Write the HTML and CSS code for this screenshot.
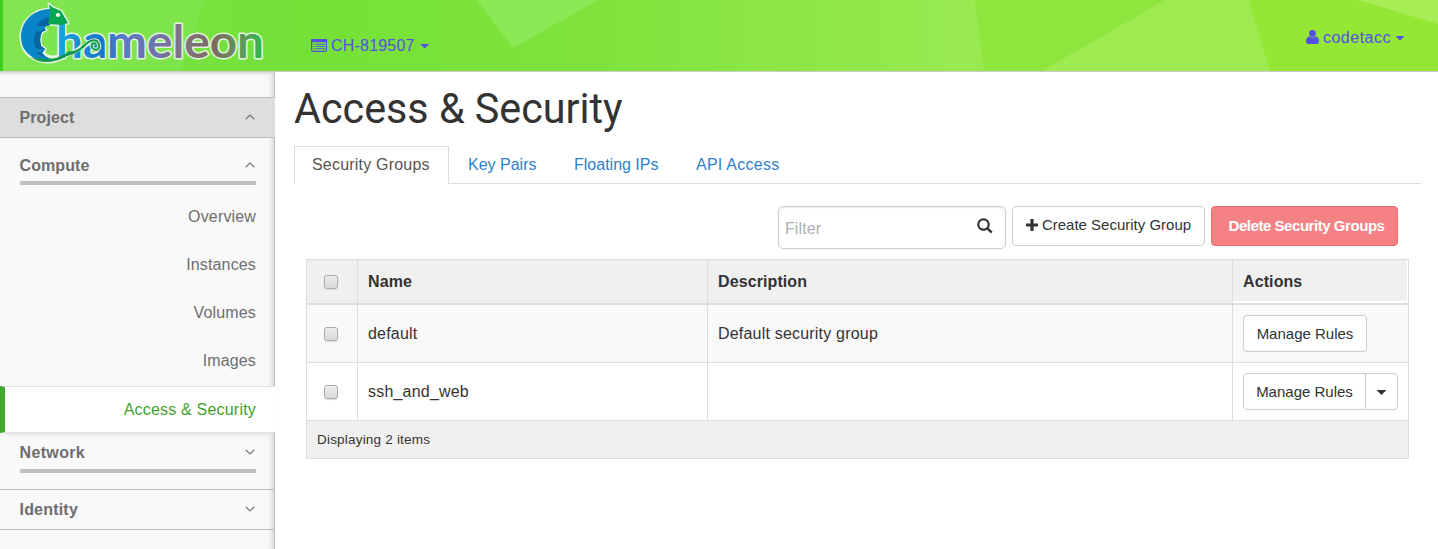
FILE: index.html
```html
<!DOCTYPE html>
<html lang="en">
<head>
<meta charset="utf-8">
<title>Access &amp; Security</title>
<link rel="stylesheet" href="styles.css">
</head>
<body>
<header class="topbar">
  <svg class="topbar-art" viewBox="0 0 1438 71" preserveAspectRatio="none" aria-hidden="true">
    <defs><linearGradient id="sky" x1="0" x2="1"><stop offset="0" stop-color="#7ee44b"/><stop offset=".2" stop-color="#73e137"/><stop offset=".42" stop-color="#80e33c"/><stop offset=".67" stop-color="#98ea50"/><stop offset="1" stop-color="#9be93b"/></linearGradient></defs>
    <rect width="1438" height="71" fill="url(#sky)"/>
    <path d="M0 0H205L180 71H0Z" fill="#82e654" opacity=".6"/>
    <path d="M0 0H3V71H0Z" fill="#3dcf1c"/>
    <path d="M477 0H598L513 48Z" fill="#8ae955"/>
    <path d="M975 0H1165L1042 71H984Z" fill="#8de53d"/>
    <path d="M1165 0H1249L1270 71H1042Z" fill="#9deb51"/>
    <path d="M1249 0H1358L1438 24V71H1270Z" fill="#95e735"/>
    <path d="M1358 0H1438V24Z" fill="#a6ed56"/>
  </svg>
  <a class="logo" href="#">
    <svg width="275" height="71" viewBox="0 0 275 71">
      <defs>
        <linearGradient id="word" gradientUnits="userSpaceOnUse" x1="58" x2="262" y1="0" y2="0"><stop offset="0" stop-color="#18a5e0"/><stop offset=".22" stop-color="#1b75c8"/><stop offset=".32" stop-color="#5b79c6"/><stop offset=".5" stop-color="#7373a5"/><stop offset=".62" stop-color="#80737f"/><stop offset=".77" stop-color="#7c6b60"/><stop offset=".9" stop-color="#60985a"/><stop offset="1" stop-color="#31b64d"/></linearGradient>
      </defs>
      <path class="halo" d="M50 9C30 10 21 24 21 37C21 50 29 60 46 62Q58 62 66 56L58 56Q50 59 43 53L45 49L41 46Q39 38 42 32L46 30L43 27L48 24L62 25L68 23L61 11L52 7L49 4Z"/>
      <text class="wordmark" x="56" y="58" textLength="208" lengthAdjust="spacingAndGlyphs" fill="url(#word)">hameleon</text>
      <path d="M50 9C30 10 21 24 21 37C21 49 29 59 46 61L52 59Q46 58 42 53L45 49L41 46Q39 38 42 32L46 30L43 27L50 25Z" fill="#0785c8"/>
      <path d="M50 17Q40 19 36 26L39 27L36 31Q31 42 38 54L49 59Q45 57 42 53L45 49L41 46Q39 38 42 32L46 30L43 27L50 25Z" fill="#07669f"/>
      <path d="M38 26H46L44 30L38 32L34 29ZM34 47L38 49H44L41 52L36 52Z" fill="#0785c8"/>
      <path d="M49 4L52 7L61 11L68 23L62 25L48 24Q51 14 49 4Z" fill="#08a650"/>
      <circle cx="58" cy="15" r="2.1" fill="#fff"/>
      <path class="tail-edge" d="M65 55Q74 54 82 46"/>
      <path d="M31 57Q42 59 50 59Q60 58 69 51Q77 52 83 45L84 47Q77 54 67 56Q57 62 46 62Q37 62 31 57Z" fill="#129950"/>
      <path class="curl-edge" d="M85 46Q91 39 97 41Q102 48 96 50Q90 48 92 44Q96 42 96 46"/>
      <path class="curl" d="M83 47Q91 38 97 41Q102 48 96 50Q90 48 92 44Q96 42 96 46"/>
    </svg>
  </a>
  <a class="project-menu" href="#">
    <svg width="16" height="13" viewBox="0 0 16 13"><rect x=".6" y=".6" width="14.8" height="11.8" rx="1.2" fill="none" stroke="currentColor" stroke-width="1.2"/><path d="M0 0H16V3.2H0Z" fill="currentColor"/><path d="M2.2 5.3H3.4M4.5 5.3H14M2.2 7.5H3.4M4.5 7.5H14M2.2 9.7H3.4M4.5 9.7H14" stroke="currentColor" stroke-width=".9"/></svg>
    <span class="project-name">CH-819507</span><i class="caret"></i>
  </a>
  <a class="user-menu" href="#">
    <svg width="13" height="14" viewBox="0 0 13 14"><circle cx="6.5" cy="3.5" r="3.4" fill="currentColor"/><path d="M3.2 6.2Q6.5 9 9.8 6.2Q13 7 13 11.5Q13 14 10.8 14H2.2Q0 14 0 11.5Q0 7 3.2 6.2Z" fill="currentColor"/></svg>
    <span class="user-name">codetacc</span><i class="caret"></i>
  </a>
</header>
<div class="page">
  <nav class="sidebar">
    <div class="section open"><span>Project</span><svg class="chev" viewBox="0 0 10 6"><path d="M.7 5.2L5 1L9.3 5.2"/></svg></div>
    <div class="group compute"><span>Compute</span><svg class="chev" viewBox="0 0 10 6"><path d="M.7 5.2L5 1L9.3 5.2"/></svg></div>
    <ul class="links">
      <li>Overview</li><li>Instances</li><li>Volumes</li><li>Images</li>
      <li class="active">Access &amp; Security</li>
    </ul>
    <div class="group network"><span>Network</span><svg class="chev" viewBox="0 0 10 6"><path d="M.7 .8L5 5L9.3 .8"/></svg></div>
    <div class="section identity"><span>Identity</span><svg class="chev" viewBox="0 0 10 6"><path d="M.7 .8L5 5L9.3 .8"/></svg></div>
  </nav>
  <main class="content">
    <h1><span class="title">Access &amp; Security</span></h1>
    <div class="tabs">
      <a class="tab current" href="#">Security Groups</a><a class="tab t-keys" href="#">Key Pairs</a><a class="tab t-ips" href="#">Floating IPs</a><a class="tab t-api" href="#">API Access</a>
    </div>
    <div class="toolbar">
      <div class="filter"><span>Filter</span><svg width="16" height="16" viewBox="0 0 16 16"><circle cx="6.5" cy="6.5" r="5.2" fill="none" stroke="#333" stroke-width="2.2"/><path d="M10.2 10.2L14.7 14.7" stroke="#333" stroke-width="2.4"/></svg></div>
      <button class="btn create"><svg width="12" height="12" viewBox="0 0 12 12"><path d="M6 0V12M0 6H12" stroke="#333" stroke-width="3.2"/></svg><span>Create Security Group</span></button>
      <button class="btn delete">Delete Security Groups</button>
    </div>
    <table class="groups">
      <colgroup><col class="c-check"><col class="c-name"><col class="c-desc"><col class="c-act"></colgroup>
      <thead><tr><th><i class="check"></i></th><th>Name</th><th>Description</th><th class="actions">Actions</th></tr></thead>
      <tbody>
        <tr class="odd"><td><i class="check"></i></td><td>default</td><td>Default security group</td><td><button class="btn manage">Manage Rules</button></td></tr>
        <tr><td><i class="check"></i></td><td>ssh_and_web</td><td></td><td><div class="split"><button class="btn manage">Manage Rules</button><button class="btn more"><i class="caret"></i></button></div></td></tr>
      </tbody>
      <tfoot><tr><td colspan="4">Displaying 2 items</td></tr></tfoot>
    </table>
  </main>
</div>
</body>
</html>
```
FILE: styles.css
```css
* { box-sizing: border-box; }
body { margin: 0; background: #fff; color: #333; font: 16px/20px "Liberation Sans", Arial, sans-serif; letter-spacing: .1px; overflow: hidden; }
a { text-decoration: none; }
svg { flex: none; }

.topbar { position: relative; display: flex; align-items: flex-start; height: 72px; border-bottom: 1px solid #ccc; }
.topbar-art { position: absolute; inset: 0; width: 100%; height: 71px; }
.logo, .project-menu, .user-menu { position: relative; display: flex; align-items: center; color: #5450e4; }
.logo { width: 275px; height: 71px; }
.halo { fill: none; stroke: #e4f5df; stroke-width: 3px; stroke-linejoin: round; }
.tail-edge, .curl-edge { fill: none; stroke: #d9f2e0; stroke-width: 4px; }
.curl { fill: none; stroke: #129950; stroke-width: 2px; }
.wordmark { font: 700 45px Lato, sans-serif; letter-spacing: 0; stroke: #e4f5df; stroke-width: 3px; paint-order: stroke; stroke-linejoin: round; }
.project-menu { margin: 36px 0 0 36px; gap: 4px; }
.project-menu svg { margin-top: -1px; }
.project-name { letter-spacing: .2px; }
.project-menu .caret { margin-left: 1px; }
.user-menu { margin: 28px 33px 0 auto; gap: 4px; }
.user-menu svg { margin-top: -2px; }
.user-name { letter-spacing: .5px; }
.caret { width: 10px; height: 5px; background: currentColor; clip-path: polygon(0 0, 100% 0, 50% 100%); }

.page { display: flex; height: 477px; }
.sidebar { width: 275px; flex: none; padding-top: 25px; background: #f9f9f9; color: #6e6e6e; border-right: 1px solid #bdbdbd; box-shadow: inset -6px 0 5px -4px #d4d4d4, inset 0 5px 5px -5px #bbb; }
.section, .group { display: flex; align-items: center; justify-content: space-between; font-weight: 700; }
.section span, .group span { margin-left: -.5px; }
.section { height: 41px; padding: 0 19px 0 20px; border: solid #bcbcbc; border-width: 1px 0; }
.section.open { background: #dedede; margin-right: -1px; padding-right: 20px; }
.group { margin: 0 18px 0 20px; border-bottom: 4px solid #c0c0c0; }
.chev { width: 10px; height: 6px; margin-top: -1px; fill: none; stroke: #777; stroke-width: 1.2; }
.compute { height: 47px; padding: 12px 1px 0 0; }
.network { height: 40px; padding: 3px 1px 0 0; margin-bottom: 16px; letter-spacing: .35px; }
.identity { letter-spacing: .2px; }
.links { list-style: none; margin: 0; padding: 7px 0 0; text-align: right; letter-spacing: .15px; }
.links li { height: 48px; padding: 15px 18px 0 0; }
.links .active { height: 47px; margin: 2px -1px 0 0; padding: 13px 19px 0 0; color: #3fa22d; background: #fff; border: solid #e2e2e2; border-width: 1px 0; border-left: 5px solid #41a62e; box-shadow: 0 4px 5px -3px #ddd; letter-spacing: .2px; }

.content { flex: 1; padding: 13px 17px 0 19px; }
h1 { margin: 0; height: 61px; font: 400 43px/46px Roboto, sans-serif; letter-spacing: 0; color: #333; }
.title { display: inline-block; transform-origin: 0 50%; transform: scaleX(.96); white-space: nowrap; }
.tabs { display: flex; height: 38px; border-bottom: 1px solid #ddd; }
.tab { height: 37px; padding: 9px 0 0 19px; color: #2f7fcb; white-space: nowrap; }
.tab.current { width: 155px; height: 38px; padding: 8px 0 0 17px; color: #555; background: #fff; border: 1px solid #ddd; border-bottom: 0; letter-spacing: .2px; }
.t-keys { width: 106px; letter-spacing: 0; }
.t-ips { width: 122px; letter-spacing: 0; }
.t-api { letter-spacing: .25px; }
.toolbar { display: flex; align-items: flex-start; justify-content: flex-end; gap: 6px; height: 75px; padding: 22px 23px 0 0; }
.btn { display: flex; align-items: center; justify-content: center; padding: 0; border: 1px solid #ccc; border-radius: 4px; background: #fff; color: #333; font: 15px/20px "Liberation Sans", Arial, sans-serif; white-space: nowrap; }
.filter { display: flex; justify-content: space-between; width: 228px; height: 43px; padding: 12px 12px 0 6px; border: 1px solid #ccc; border-radius: 5px; color: #b0b0b0; letter-spacing: .1px; box-shadow: inset 0 1px 2px #eee; }
.filter svg { margin-top: -1px; }
.create { width: 193px; height: 40px; gap: 4px; padding-bottom: 2px; }
.create svg { margin-top: -1px; }
.delete { width: 187px; height: 40px; padding-left: 4px; color: #fff; background: #f48183; border-color: #ef6c70; font-weight: 700; letter-spacing: -.45px; }

.groups { width: 1103px; margin-left: 12px; table-layout: fixed; border-collapse: separate; border-spacing: 0; border: solid #ddd; border-width: 1px 0 0 1px; }
.c-check { width: 51px; }
.c-name { width: 350px; }
.c-desc { width: 525px; }
.c-act { width: 176px; }
th, td { padding: 0 10px; border: solid #ddd; border-width: 0 1px 1px 0; text-align: left; vertical-align: middle; }
th { height: 45px; background: #f0f0f0; border-bottom-width: 2px; }
th.actions { box-shadow: inset -1px -2px #fff; }
tbody td { height: 58px; letter-spacing: .2px; }
.odd td { background: #f9f9f9; }
tfoot td { height: 38px; background: #f0f0f0; font-size: 13.5px; letter-spacing: .2px; }
.check { display: block; width: 14px; height: 14px; margin-left: 7px; border: 1px solid #aaa; border-radius: 3px; background: linear-gradient(#ededed, #d9d9d9); box-shadow: 0 1px 1px #ddd; }
.manage { width: 124px; height: 37px; }
.split { display: flex; }
.split .manage { width: 123px; border-radius: 4px 0 0 4px; }
.more { width: 33px; height: 37px; margin-left: -1px; padding-top: 2px; border-radius: 0 4px 4px 0; }
```
